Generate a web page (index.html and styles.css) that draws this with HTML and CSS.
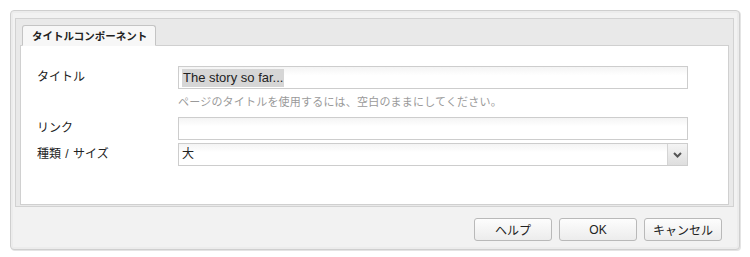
FILE: index.html
```html
<!DOCTYPE html>
<html lang="ja">
<head>
  <meta charset="UTF-8" />
  <title>タイトルコンポーネント</title>
  <link rel="stylesheet" href="styles.css">
</head>
<body>
  <div class="dialog">
    <div class="panel">
      <div class="tabs">
        <div class="tab">タイトルコンポーネント</div>
      </div>
      <div class="tab-body">
        <div class="row">
          <label>タイトル</label>
          <div class="field"><span class="sel">The story so far...</span></div>
        </div>
        <div class="hint">ページのタイトルを使用するには、空白のままにしてください。</div>
        <div class="row">
          <label>リンク</label>
          <div class="field"></div>
        </div>
        <div class="row">
          <label>種類 / サイズ</label>
          <div class="field select">
            <span>大</span>
            <span class="arrow">
              <svg width="9" height="6" viewBox="0 0 9 6"><path d="M1 1 L4.5 4.5 L8 1" fill="none" stroke="#555" stroke-width="2"/></svg>
            </span>
          </div>
        </div>
      </div>
    </div>
    <div class="buttons">
      <button>ヘルプ</button>
      <button>OK</button>
      <button>キャンセル</button>
    </div>
  </div>
</body>
</html>
```

FILE: styles.css
```css
body {
  margin: 0;
  padding: 10px;
  background: #fff;
  font-family: "Liberation Sans", "Noto Sans CJK JP", sans-serif;
  font-size: 11.5px;
  color: #222;
}
.dialog {
  width: 730px;
  height: 240px;
  border: 1px solid #cfcfcf;
  border-radius: 4px;
  background: #f2f2f2;
  box-shadow: inset 0 0 0 2px #ececec, 1px 1px 0 #e4e4e4;
  padding: 7px 5px 0 4px;
  box-sizing: border-box;
}
.panel {
  border: 1px solid #d2d2d2;
  background: #e9e9e9;
  padding: 0 4px 1px 4px;
}
.tabs {
  height: 26px;
  display: flex;
  align-items: flex-end;
  padding-left: 2px;
}
.tab {
  width: 134px;
  height: 21px;
  border: 1px solid #c4c4c4;
  border-bottom: 1px solid #f7f7f7;
  border-radius: 3px 3px 0 0;
  background: #f7f7f7;
  font-weight: bold;
  font-size: 10.5px;
  line-height: 20px;
  white-space: nowrap;
  padding-left: 9px;
  box-sizing: border-box;
  margin-bottom: -1px;
  position: relative;
  z-index: 1;
}
.tab-body {
  background: #fff;
  border: 1px solid #d0d0d0;
  height: 160px;
  box-sizing: border-box;
  padding: 20px 0 0 16px;
}
.row {
  display: flex;
  align-items: center;
  margin-bottom: 3px;
}
.row label {
  width: 141px;
  font-size: 12px;
  word-spacing: 1px;
  padding-bottom: 5px;
}
.field {
  width: 510px;
  height: 23px;
  border: 1px solid #cdcdcd;
  background: linear-gradient(#f4f4f4, #fff 40%);
  box-sizing: border-box;
  padding: 0 3px;
  line-height: 21px;
  font-size: 12px;
}
.sel {
  background: #d6d6d6;
  font-size: 13px;
  padding: 1px 1px 2px;
}
.hint {
  color: #9a9a9a;
  font-size: 11px;
  letter-spacing: 0.2px;
  margin: 4px 0 10px 141px;
  height: 14px;
}
.select {
  display: flex;
  justify-content: space-between;
  padding-right: 0;
}
.arrow {
  width: 19px;
  border-left: 1px solid #d4d4d4;
  background: linear-gradient(#f4f4f4, #dedede);
  display: flex;
  align-items: center;
  justify-content: center;
}
.buttons {
  display: flex;
  justify-content: flex-end;
  gap: 7px;
  padding: 11px 12px 0 0;
}
button {
  width: 78px;
  height: 23px;
  border: 1px solid #b9b9b9;
  border-radius: 3px;
  background: linear-gradient(#fdfdfd, #ececec);
  font-family: "Liberation Sans", "Noto Sans CJK JP", sans-serif;
  font-size: 12px;
  color: #222;
  padding: 0;
}
```
